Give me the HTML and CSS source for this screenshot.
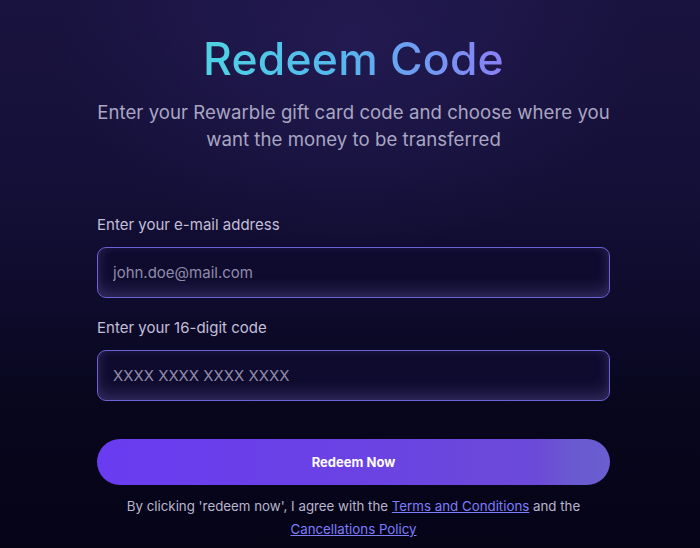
FILE: index.html
```html
<!DOCTYPE html>
<html lang="en">
<head>
<meta charset="utf-8">
<title>Redeem Code</title>
<link rel="stylesheet" href="styles.css">
</head>
<body>
<main class="page">
  <section class="panel">
    <h1 class="title">Redeem Code</h1>
    <p class="subtitle">Enter your Rewarble gift card code and choose where you want the money to be transferred</p>
    <form class="form">
      <label class="field">
        <span class="label">Enter your e-mail address</span>
        <input class="input" type="text" placeholder="john.doe@mail.com">
      </label>
      <label class="field">
        <span class="label">Enter your 16-digit code</span>
        <input class="input" type="text" placeholder="XXXX XXXX XXXX XXXX">
      </label>
      <button class="button" type="button">Redeem Now</button>
      <p class="terms">By clicking 'redeem now', I agree with the <a href="#">Terms and Conditions</a> and the <a href="#">Cancellations Policy</a></p>
    </form>
  </section>
</main>
</body>
</html>
```

FILE: styles.css
```css
* { box-sizing: border-box; }
html, body { margin: 0; height: 100%; }
body {
  font-family: Inter, "Noto Sans", sans-serif;
  background:
    radial-gradient(ellipse 420px 300px at 350px 40px, rgba(50, 38, 110, 0.4), rgba(50, 38, 110, 0) 70%),
    linear-gradient(180deg, #19133f 0%, #151039 30%, #0e0b2c 55%, #07061c 75%, #050417 100%);
  color: #c4c1da;
  overflow: hidden;
}
.page {
  padding: 31px 90px 0 97px;
}
.panel {
  display: flex;
  flex-direction: column;
}
.title {
  margin: 0;
  text-align: center;
  font-size: 44.5px;
  font-weight: 500;
  line-height: 56px;
  letter-spacing: 0.2px;
  background: linear-gradient(90deg, #4ed3e3 0%, #55b8ee 45%, #8a7ff7 100%);
  -webkit-background-clip: text;
  background-clip: text;
  color: transparent;
  align-self: center;
}
.subtitle {
  margin: 12px 0 0;
  text-align: center;
  font-size: 18.6px;
  line-height: 27px;
  color: #a9a6c2;
  font-weight: 400;
  letter-spacing: 0.05px;
}
.form {
  display: flex;
  flex-direction: column;
  margin-top: 62px;
}
.field {
  display: flex;
  flex-direction: column;
  gap: 12px;
  margin-bottom: 20px;
}
.label {
  font-size: 15px;
  line-height: 20px;
  color: #c2bfd8;
}
.input {
  height: 51px;
  width: 100%;
  border: 1px solid #6a62d6;
  border-radius: 9px;
  background: #0f0b2e;
  box-shadow: inset 0 -8px 14px rgba(110, 100, 180, 0.28), inset 0 0 10px rgba(120, 110, 200, 0.12);
  padding: 0 15px;
  font-family: inherit;
  font-size: 15px;
  color: #e0def0;
  outline: none;
}
.input::placeholder { color: #8f8cab; }
.button {
  margin-top: 18px;
  height: 46px;
  border: none;
  border-radius: 23px;
  background: linear-gradient(90deg, #6a3cf1 0%, #6a41e5 45%, #6c4ad8 86%, #6a5ad0 93%, #6a5ed0 100%);
  color: #fff;
  font-family: inherit;
  font-size: 13px;
  font-weight: 700;
  cursor: pointer;
}
.terms {
  margin: 10px 0 0;
  text-align: center;
  font-size: 13.3px;
  line-height: 23px;
  color: #b8b5cf;
  padding: 0 20px;
}
.terms a {
  color: #7d7dff;
  text-decoration: underline;
}
```
